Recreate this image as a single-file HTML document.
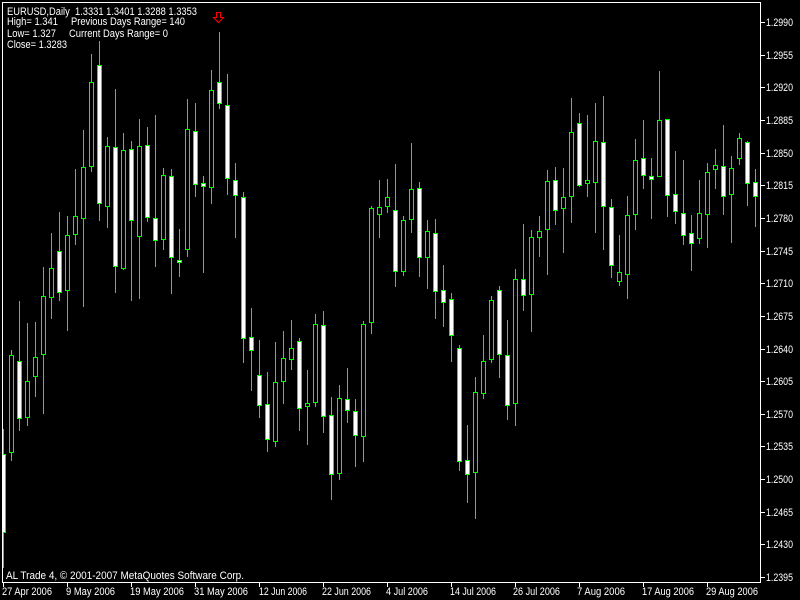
<!DOCTYPE html>
<html><head><meta charset="utf-8"><style>
html,body{margin:0;padding:0;background:#000;}
svg{display:block}
text{font-family:"Liberation Sans",sans-serif;font-size:11px;fill:#fff}
</style></head><body>
<svg width="800" height="600" viewBox="0 0 800 600" xmlns="http://www.w3.org/2000/svg" shape-rendering="crispEdges">
<rect width="800" height="600" fill="#000"/>
<g stroke="#00ff00" stroke-width="1">
<path d="M3.5 429V568M11.5 350V461M19.5 301V431M27.5 323V426M35.5 322V397M43.5 267V414M51.5 233V319M59.5 212V301M67.5 216V331M75.5 169V245M83.5 130V307M91.5 54V172M99.5 41V221M107.5 137V228M115.5 89V293M123.5 133V270M131.5 141V301M139.5 119V299M147.5 127V222M155.5 115V267M163.5 168V250M171.5 169V294M179.5 229V277M187.5 99V257M195.5 103V197M203.5 176V273M211.5 70V204M219.5 32V109M227.5 74V195M235.5 163V238M243.5 192V363M251.5 308V391M259.5 340V418M267.5 372V452M275.5 342V447M283.5 331V404M291.5 320V370M299.5 338V431M307.5 370V445M315.5 314V407M323.5 311V433M331.5 397V500M339.5 385V480M347.5 368V423M355.5 399V467M363.5 321V462M371.5 206V334M379.5 180V238M387.5 179V213M395.5 164V287M403.5 216V276M411.5 143V233M419.5 182V277M427.5 220V289M435.5 219V319M443.5 265V327M451.5 293V362M459.5 345V471M467.5 425V503M475.5 377V519M483.5 335V399M491.5 296V363M499.5 286V378M507.5 320V420M515.5 269V426M523.5 224V311M531.5 230V332M539.5 216V257M547.5 170V275M555.5 167V225M563.5 168V253M571.5 98V223M579.5 113V187M587.5 115V197M595.5 103V233M603.5 96V250M611.5 199V278M619.5 235V286M627.5 196V299M635.5 139V230M643.5 120V189M651.5 158V219M659.5 71V176M667.5 119V217M675.5 151V224M683.5 160V245M691.5 215V271M699.5 180V244M707.5 163V248M715.5 149V189M723.5 125V215M731.5 156V243M739.5 133V165M747.5 141V206M755.5 169V227"/>
<rect x="1.5" y="454.5" width="4" height="78" fill="#fff"/>
<rect x="9.5" y="355.5" width="4" height="97" fill="#000"/>
<rect x="17.5" y="361.5" width="4" height="57" fill="#fff"/>
<rect x="25.5" y="381.5" width="4" height="36" fill="#000"/>
<rect x="33.5" y="357.5" width="4" height="19" fill="#000"/>
<rect x="41.5" y="296.5" width="4" height="58" fill="#000"/>
<rect x="49.5" y="268.5" width="4" height="29" fill="#000"/>
<rect x="57.5" y="251.5" width="4" height="41" fill="#fff"/>
<rect x="65.5" y="235.5" width="4" height="55" fill="#000"/>
<rect x="73.5" y="216.5" width="4" height="18" fill="#000"/>
<rect x="81.5" y="167.5" width="4" height="51" fill="#000"/>
<rect x="89.5" y="82.5" width="4" height="84" fill="#000"/>
<rect x="97.5" y="65.5" width="4" height="138" fill="#fff"/>
<rect x="105.5" y="146.5" width="4" height="60" fill="#000"/>
<rect x="113.5" y="147.5" width="4" height="119" fill="#fff"/>
<rect x="121.5" y="150.5" width="4" height="118" fill="#000"/>
<rect x="129.5" y="149.5" width="4" height="71" fill="#fff"/>
<rect x="137.5" y="146.5" width="4" height="90" fill="#000"/>
<rect x="145.5" y="145.5" width="4" height="72" fill="#fff"/>
<rect x="153.5" y="218.5" width="4" height="22" fill="#fff"/>
<rect x="161.5" y="175.5" width="4" height="64" fill="#000"/>
<rect x="169.5" y="176.5" width="4" height="81" fill="#fff"/>
<rect x="177.5" y="260.5" width="4" height="2" fill="#fff"/>
<rect x="185.5" y="129.5" width="4" height="120" fill="#000"/>
<rect x="193.5" y="131.5" width="4" height="53" fill="#fff"/>
<rect x="201.5" y="183.5" width="4" height="3" fill="#fff"/>
<rect x="209.5" y="90.5" width="4" height="97" fill="#000"/>
<rect x="217.5" y="82.5" width="4" height="21" fill="#fff"/>
<rect x="225.5" y="105.5" width="4" height="73" fill="#fff"/>
<rect x="233.5" y="180.5" width="4" height="15" fill="#fff"/>
<rect x="241.5" y="197.5" width="4" height="141" fill="#fff"/>
<rect x="249.5" y="337.5" width="4" height="13" fill="#fff"/>
<rect x="257.5" y="375.5" width="4" height="30" fill="#fff"/>
<rect x="265.5" y="404.5" width="4" height="35" fill="#fff"/>
<rect x="273.5" y="382.5" width="4" height="59" fill="#000"/>
<rect x="281.5" y="358.5" width="4" height="23" fill="#000"/>
<rect x="289.5" y="348.5" width="4" height="11" fill="#000"/>
<rect x="297.5" y="341.5" width="4" height="67" fill="#fff"/>
<rect x="305.5" y="403.5" width="4" height="3" fill="#000"/>
<rect x="313.5" y="324.5" width="4" height="78" fill="#000"/>
<rect x="321.5" y="325.5" width="4" height="91" fill="#fff"/>
<rect x="329.5" y="415.5" width="4" height="59" fill="#fff"/>
<rect x="337.5" y="398.5" width="4" height="75" fill="#000"/>
<rect x="345.5" y="399.5" width="4" height="11" fill="#fff"/>
<rect x="353.5" y="411.5" width="4" height="24" fill="#fff"/>
<rect x="361.5" y="324.5" width="4" height="112" fill="#000"/>
<rect x="369.5" y="208.5" width="4" height="114" fill="#000"/>
<rect x="377.5" y="207.5" width="4" height="7" fill="#000"/>
<rect x="385.5" y="197.5" width="4" height="9" fill="#000"/>
<rect x="393.5" y="210.5" width="4" height="61" fill="#fff"/>
<rect x="401.5" y="220.5" width="4" height="51" fill="#000"/>
<rect x="409.5" y="189.5" width="4" height="30" fill="#000"/>
<rect x="417.5" y="188.5" width="4" height="69" fill="#fff"/>
<rect x="425.5" y="231.5" width="4" height="26" fill="#000"/>
<rect x="433.5" y="233.5" width="4" height="58" fill="#fff"/>
<rect x="441.5" y="290.5" width="4" height="12" fill="#fff"/>
<rect x="449.5" y="299.5" width="4" height="36" fill="#fff"/>
<rect x="457.5" y="348.5" width="4" height="113" fill="#fff"/>
<rect x="465.5" y="460.5" width="4" height="14" fill="#fff"/>
<rect x="473.5" y="392.5" width="4" height="80" fill="#000"/>
<rect x="481.5" y="361.5" width="4" height="32" fill="#000"/>
<rect x="489.5" y="300.5" width="4" height="59" fill="#000"/>
<rect x="497.5" y="290.5" width="4" height="64" fill="#fff"/>
<rect x="505.5" y="355.5" width="4" height="50" fill="#fff"/>
<rect x="513.5" y="279.5" width="4" height="124" fill="#000"/>
<rect x="521.5" y="279.5" width="4" height="16" fill="#fff"/>
<rect x="529.5" y="237.5" width="4" height="57" fill="#000"/>
<rect x="537.5" y="231.5" width="4" height="6" fill="#000"/>
<rect x="545.5" y="181.5" width="4" height="48" fill="#000"/>
<rect x="553.5" y="180.5" width="4" height="30" fill="#fff"/>
<rect x="561.5" y="197.5" width="4" height="11" fill="#000"/>
<rect x="569.5" y="132.5" width="4" height="64" fill="#000"/>
<rect x="577.5" y="123.5" width="4" height="62" fill="#fff"/>
<rect x="585.5" y="180.5" width="4" height="3" fill="#000"/>
<rect x="593.5" y="141.5" width="4" height="41" fill="#000"/>
<rect x="601.5" y="142.5" width="4" height="64" fill="#fff"/>
<rect x="609.5" y="207.5" width="4" height="58" fill="#fff"/>
<rect x="617.5" y="272.5" width="4" height="9" fill="#000"/>
<rect x="625.5" y="215.5" width="4" height="59" fill="#000"/>
<rect x="633.5" y="160.5" width="4" height="54" fill="#000"/>
<rect x="641.5" y="158.5" width="4" height="17" fill="#fff"/>
<rect x="649.5" y="176.5" width="4" height="3" fill="#fff"/>
<rect x="657.5" y="120.5" width="4" height="56" fill="#000"/>
<rect x="665.5" y="119.5" width="4" height="76" fill="#fff"/>
<rect x="673.5" y="194.5" width="4" height="17" fill="#fff"/>
<rect x="681.5" y="213.5" width="4" height="22" fill="#fff"/>
<rect x="689.5" y="233.5" width="4" height="10" fill="#fff"/>
<rect x="697.5" y="213.5" width="4" height="25" fill="#000"/>
<rect x="705.5" y="172.5" width="4" height="42" fill="#000"/>
<rect x="713.5" y="165.5" width="4" height="4" fill="#000"/>
<rect x="721.5" y="166.5" width="4" height="30" fill="#fff"/>
<rect x="729.5" y="168.5" width="4" height="26" fill="#000"/>
<rect x="737.5" y="138.5" width="4" height="20" fill="#000"/>
<rect x="745.5" y="142.5" width="4" height="41" fill="#fff"/>
<rect x="753.5" y="182.5" width="4" height="14" fill="#fff"/>
</g>
<rect x="0" y="0" width="2" height="600" fill="#000"/>
<path d="M216.5 12.5H220.5V17.5H223.5L218.5 22.5L213.5 17.5H216.5Z" fill="none" stroke="#ff0000" stroke-width="1"/>
<g stroke="#fff" stroke-width="1" fill="none">
<path d="M2.5 2.5H760.5V582.5H2.5Z"/>
<path d="M760 22.5h5M760 55.5h5M760 87.5h5M760 120.5h5M760 153.5h5M760 185.5h5M760 218.5h5M760 251.5h5M760 283.5h5M760 316.5h5M760 349.5h5M760 381.5h5M760 414.5h5M760 446.5h5M760 479.5h5M760 512.5h5M760 544.5h5M760 577.5h5"/>
<path d="M3.5 582v5M67.5 582v5M131.5 582v5M195.5 582v5M259.5 582v5M323.5 582v5M387.5 582v5M451.5 582v5M515.5 582v5M579.5 582v5M643.5 582v5M707.5 582v5"/>
</g>
<g lengthAdjust="spacingAndGlyphs">
<text x="766" y="26" textLength="27" lengthAdjust="spacingAndGlyphs">1.2990</text>
<text x="766" y="59" textLength="27" lengthAdjust="spacingAndGlyphs">1.2955</text>
<text x="766" y="91" textLength="27" lengthAdjust="spacingAndGlyphs">1.2920</text>
<text x="766" y="124" textLength="27" lengthAdjust="spacingAndGlyphs">1.2885</text>
<text x="766" y="157" textLength="27" lengthAdjust="spacingAndGlyphs">1.2850</text>
<text x="766" y="189" textLength="27" lengthAdjust="spacingAndGlyphs">1.2815</text>
<text x="766" y="222" textLength="27" lengthAdjust="spacingAndGlyphs">1.2780</text>
<text x="766" y="255" textLength="27" lengthAdjust="spacingAndGlyphs">1.2745</text>
<text x="766" y="287" textLength="27" lengthAdjust="spacingAndGlyphs">1.2710</text>
<text x="766" y="320" textLength="27" lengthAdjust="spacingAndGlyphs">1.2675</text>
<text x="766" y="353" textLength="27" lengthAdjust="spacingAndGlyphs">1.2640</text>
<text x="766" y="385" textLength="27" lengthAdjust="spacingAndGlyphs">1.2605</text>
<text x="766" y="418" textLength="27" lengthAdjust="spacingAndGlyphs">1.2570</text>
<text x="766" y="450" textLength="27" lengthAdjust="spacingAndGlyphs">1.2535</text>
<text x="766" y="483" textLength="27" lengthAdjust="spacingAndGlyphs">1.2500</text>
<text x="766" y="516" textLength="27" lengthAdjust="spacingAndGlyphs">1.2465</text>
<text x="766" y="548" textLength="27" lengthAdjust="spacingAndGlyphs">1.2430</text>
<text x="766" y="581" textLength="27" lengthAdjust="spacingAndGlyphs">1.2395</text>
<text x="2" y="595" textLength="50" lengthAdjust="spacingAndGlyphs">27 Apr 2006</text>
<text x="66" y="595" textLength="49" lengthAdjust="spacingAndGlyphs">9 May 2006</text>
<text x="130" y="595" textLength="54" lengthAdjust="spacingAndGlyphs">19 May 2006</text>
<text x="194" y="595" textLength="54" lengthAdjust="spacingAndGlyphs">31 May 2006</text>
<text x="259" y="595" textLength="48" lengthAdjust="spacingAndGlyphs">12 Jun 2006</text>
<text x="322" y="595" textLength="49" lengthAdjust="spacingAndGlyphs">22 Jun 2006</text>
<text x="386" y="595" textLength="42" lengthAdjust="spacingAndGlyphs">4 Jul 2006</text>
<text x="450" y="595" textLength="46" lengthAdjust="spacingAndGlyphs">14 Jul 2006</text>
<text x="513" y="595" textLength="47" lengthAdjust="spacingAndGlyphs">26 Jul 2006</text>
<text x="577" y="595" textLength="48" lengthAdjust="spacingAndGlyphs">7 Aug 2006</text>
<text x="642" y="595" textLength="52" lengthAdjust="spacingAndGlyphs">17 Aug 2006</text>
<text x="706" y="595" textLength="52" lengthAdjust="spacingAndGlyphs">29 Aug 2006</text>
<text x="7" y="15" xml:space="preserve" textLength="190" lengthAdjust="spacingAndGlyphs">EURUSD,Daily  1.3331 1.3401 1.3288 1.3353</text>
<text x="7" y="25" textLength="51" lengthAdjust="spacingAndGlyphs">High= 1.341</text>
<text x="71" y="25" textLength="114" lengthAdjust="spacingAndGlyphs">Previous Days Range= 140</text>
<text x="7" y="37" textLength="49" lengthAdjust="spacingAndGlyphs">Low= 1.327</text>
<text x="69" y="37" textLength="99" lengthAdjust="spacingAndGlyphs">Current Days Range= 0</text>
<text x="7" y="48" textLength="60" lengthAdjust="spacingAndGlyphs">Close= 1.3283</text>
<text x="6" y="579" textLength="238" lengthAdjust="spacingAndGlyphs">AL Trade 4, © 2001-2007 MetaQuotes Software Corp.</text>
</g>
</svg>
</body></html>
